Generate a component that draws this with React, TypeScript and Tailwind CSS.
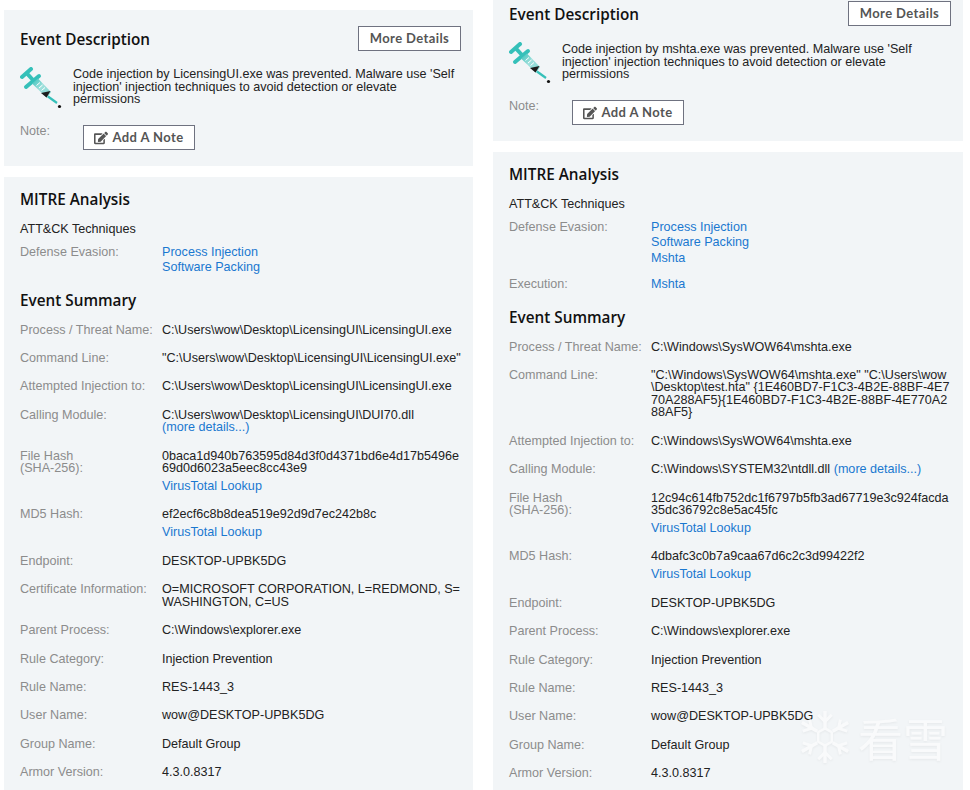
import { FaEdit } from "react-icons/fa";

type Row = {
    label: string;
    sub?: string;
    lines?: string[];
    more?: "inline" | "block";
    lookup?: boolean;
};

const leftRows: Row[] = [
    { label: "Process / Threat Name:", lines: ["C:\\Users\\wow\\Desktop\\LicensingUI\\LicensingUI.exe"] },
    { label: "Command Line:", lines: ['"C:\\Users\\wow\\Desktop\\LicensingUI\\LicensingUI.exe"'] },
    { label: "Attempted Injection to:", lines: ["C:\\Users\\wow\\Desktop\\LicensingUI\\LicensingUI.exe"] },
    { label: "Calling Module:", lines: ["C:\\Users\\wow\\Desktop\\LicensingUI\\DUI70.dll"], more: "block" },
    { label: "File Hash", sub: "(SHA-256):", lines: ["0baca1d940b763595d84d3f0d4371bd6e4d17b5496e", "69d0d6023a5eec8cc43e9"], lookup: true },
    { label: "MD5 Hash:", lines: ["ef2ecf6c8b8dea519e92d9d7ec242b8c"], lookup: true },
    { label: "Endpoint:", lines: ["DESKTOP-UPBK5DG"] },
    { label: "Certificate Information:", lines: ["O=MICROSOFT CORPORATION, L=REDMOND, S=", "WASHINGTON, C=US"] },
    { label: "Parent Process:", lines: ["C:\\Windows\\explorer.exe"] },
    { label: "Rule Category:", lines: ["Injection Prevention"] },
    { label: "Rule Name:", lines: ["RES-1443_3"] },
    { label: "User Name:", lines: ["wow@DESKTOP-UPBK5DG"] },
    { label: "Group Name:", lines: ["Default Group"] },
    { label: "Armor Version:", lines: ["4.3.0.8317"] },
];

const rightRows: Row[] = [
    { label: "Process / Threat Name:", lines: ["C:\\Windows\\SysWOW64\\mshta.exe"] },
    { label: "Command Line:", lines: ['"C:\\Windows\\SysWOW64\\mshta.exe" "C:\\Users\\wow', '\\Desktop\\test.hta" {1E460BD7-F1C3-4B2E-88BF-4E7', "70A288AF5}{1E460BD7-F1C3-4B2E-88BF-4E770A2", "88AF5}"] },
    { label: "Attempted Injection to:", lines: ["C:\\Windows\\SysWOW64\\mshta.exe"] },
    { label: "Calling Module:", lines: ["C:\\Windows\\SYSTEM32\\ntdll.dll"], more: "inline" },
    { label: "File Hash", sub: "(SHA-256):", lines: ["12c94c614fb752dc1f6797b5fb3ad67719e3c924facda", "35dc36792c8e5ac45fc"], lookup: true },
    { label: "MD5 Hash:", lines: ["4dbafc3c0b7a9caa67d6c2c3d99422f2"], lookup: true },
    { label: "Endpoint:", lines: ["DESKTOP-UPBK5DG"] },
    { label: "Parent Process:", lines: ["C:\\Windows\\explorer.exe"] },
    { label: "Rule Category:", lines: ["Injection Prevention"] },
    { label: "Rule Name:", lines: ["RES-1443_3"] },
    { label: "User Name:", lines: ["wow@DESKTOP-UPBK5DG"] },
    { label: "Group Name:", lines: ["Default Group"] },
    { label: "Armor Version:", lines: ["4.3.0.8317"] },
];

const leftMitre = [{ label: "Defense Evasion:", links: ["Process Injection", "Software Packing"] }];
const rightMitre = [
    { label: "Defense Evasion:", links: ["Process Injection", "Software Packing", "Mshta"] },
    { label: "Execution:", links: ["Mshta"] },
];

function Syringe() {
    return (
        <svg viewBox="0 0 42 44" className="w-[42px] h-[44px] shrink-0">
            <defs>
                <linearGradient id="barrel" x1="0" y1="0" x2="1" y2="1">
                    <stop offset="0" stopColor="#35c0b9" />
                    <stop offset="0.45" stopColor="#9fe0dc" />
                    <stop offset="1" stopColor="#7fd6d0" />
                </linearGradient>
            </defs>
            <path d="M2 10 L11 2" stroke="#35c0b9" strokeWidth="4" strokeLinecap="round" />
            <path d="M6.5 6 L13 13" stroke="#35c0b9" strokeWidth="4" />
            <path d="M6 20 L19 9" stroke="#35c0b9" strokeWidth="4" strokeLinecap="round" />
            <path d="M12 16.5 L18 11.5 L31 25 L27 31 Z" fill="url(#barrel)" />
            <path d="M16.5 18.5 L20 15.5 M19 21 L22.5 18 M21.5 23.5 L25 20.5" stroke="#ffffff" strokeWidth="1" />
            <path d="M21 26 L30.5 24 L26.5 30.5 Z" fill="#1c1c1c" />
            <path d="M28 29.5 L37 36" stroke="#35c0b9" strokeWidth="2.2" />
            <circle cx="39.5" cy="39.5" r="1.6" fill="#111111" />
        </svg>
    );
}

function OutlineButton({ children, className }: { children: React.ReactNode; className: string }) {
    return (
        <button className={`h-[25px] border border-[#6f7280] bg-white text-[#555] text-[13px] font-bold tracking-[0.4px] flex items-center justify-center font-['Lato',sans-serif] ${className}`}>
            {children}
        </button>
    );
}

function Heading({ children }: { children: React.ReactNode }) {
    return <h2 className="font-['Open_Sans',sans-serif] font-semibold text-[15.3px] leading-[20px] text-[#111]">{children}</h2>;
}

function Link({ children }: { children: React.ReactNode }) {
    return <span className="text-[#1a78d0]">{children}</span>;
}

function DetailRow({ row }: { row: Row }) {
    return (
        <div className="flex mb-[15.9px]">
            <div className="w-[142px] shrink-0 text-[#8c8c8c]">
                <div>{row.label}</div>
                {row.sub && <div>{row.sub}</div>}
            </div>
            <div className="text-[#222]">
                {row.lines?.map((line, i) => (
                    <div key={i} className="whitespace-nowrap">
                        {line}
                        {row.more === "inline" && <Link> (more details...)</Link>}
                    </div>
                ))}
                {row.more === "block" && <div><Link>(more details...)</Link></div>}
                {row.lookup && <div className="mt-[5px] h-[13px] leading-[13px]"><Link>VirusTotal Lookup</Link></div>}
            </div>
        </div>
    );
}

function Column({ exe, mitre, rows, className }: {
    exe: string;
    mitre: { label: string; links: string[] }[];
    rows: Row[];
    className: string;
}) {
    return (
        <div className={`shrink-0 font-['Liberation_Sans',Arial,sans-serif] text-[12.6px] leading-[12.5px] ${className}`}>
            <div className="bg-[#f2f5f7] h-[156px] px-4 pt-[16px]">
                <div className="flex items-center justify-between h-[25px] -mr-1">
                    <Heading>Event Description</Heading>
                    <OutlineButton className="w-[103px]">More Details</OutlineButton>
                </div>
                <div className="flex mt-[16px]">
                    <div className="w-[53px] shrink-0"><Syringe /></div>
                    <p className="w-[390px] text-[#222] pt-[1px]">
                        Code injection by {exe} was prevented. Malware use 'Self injection' injection techniques to avoid detection or elevate permissions
                    </p>
                </div>
                <div className="flex mt-[14px]">
                    <span className="w-[63px] text-[#8c8c8c]">Note:</span>
                    <OutlineButton className="w-[112px] gap-1">
                        <FaEdit className="text-[14px]" />
                        Add A Note
                    </OutlineButton>
                </div>
            </div>
            <div className="bg-[#f2f5f7] mt-[11px] px-4 pt-[12px] h-[900px]">
                <Heading>MITRE Analysis</Heading>
                <div className="mt-[14px] text-[#222]">ATT&amp;CK Techniques</div>
                <div className="mt-[10px]">
                    {mitre.map((m) => (
                        <div key={m.label} className="flex mb-[12px]">
                            <div className="w-[142px] shrink-0 text-[#8c8c8c]">{m.label}</div>
                            <div className="leading-[15.5px] -mt-[1px]">
                                {m.links.map((l) => <div key={l}><Link>{l}</Link></div>)}
                            </div>
                        </div>
                    ))}
                </div>
                <div className="mt-[14px] mb-[14px]"><Heading>Event Summary</Heading></div>
                {rows.map((r) => <DetailRow key={r.label} row={r} />)}
            </div>
        </div>
    );
}

export default function App() {
    return (
        <div className="relative w-[970px] h-[790px] overflow-hidden bg-white flex items-start">
            <Column exe="LicensingUI.exe" mitre={leftMitre} rows={leftRows} className="w-[469px] ml-[4px] mt-[10px]" />
            <Column exe="mshta.exe" mitre={rightMitre} rows={rightRows} className="w-[470px] ml-[20px] -mt-[15px]" />
            <div className="absolute left-[799px] top-[708px] flex items-center gap-[7px] text-[#f9fafb] pointer-events-none drop-shadow-[0_1px_1px_rgba(0,0,0,0.05)]">
                <svg viewBox="0 0 54 58" className="w-[52px] h-[58px]" fill="none" stroke="currentColor" strokeWidth="3.5">
                    <path d="M27 2 V20 M27 38 V56 M3 14 L19 23 M35 35 L51 44 M3 44 L19 35 M35 23 L51 14" />
                    <path d="M20 6 L27 13 L34 6 M20 52 L27 45 L34 52 M4 23 L13 20 L11 11 M50 35 L41 38 L43 47 M4 35 L13 38 L11 47 M50 23 L41 20 L43 11" strokeWidth="3" />
                    <path d="M27 20 L34 24 V34 L27 38 L20 34 V24 Z" strokeWidth="2.5" />
                </svg>
                <span className="font-['Noto_Sans_CJK_SC',sans-serif] font-normal text-[45px] leading-none">看雪</span>
            </div>
        </div>
    );
}
